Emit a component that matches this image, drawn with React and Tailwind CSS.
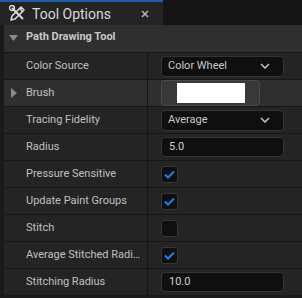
import React from "react";

const font = { fontFamily: "Roboto, 'Noto Sans', sans-serif" };

function Chevron() {
  return (
    <svg width="10" height="6" viewBox="0 0 10 6" className="shrink-0">
      <path d="M1 1 L5 5 L9 1" fill="none" stroke="#c0c0c0" strokeWidth="1.6" />
    </svg>
  );
}

function Dropdown({ value }) {
  return (
    <div className="w-[123px] h-[21px] rounded-[4px] bg-[#0f0f0f] border border-[#353535] flex items-center justify-between pl-[6px] pr-[13px] text-[11px] text-[#c8c8c8]">
      <span>{value}</span>
      <Chevron />
    </div>
  );
}

function NumInput({ value }) {
  return (
    <div className="w-[123px] h-[20px] rounded-[4px] bg-[#0f0f0f] border border-[#353535] flex items-center pl-[7px] text-[11px] text-[#d0d0d0]">
      {value}
    </div>
  );
}

function Check({ checked }) {
  return (
    <div className="w-[17px] h-[17px] rounded-[3px] bg-[#0f0f0f] border border-[#353535] flex items-center justify-center">
      {checked && (
        <svg width="11" height="9" viewBox="0 0 11 9">
          <path d="M1 4.5 L4 7.5 L10 1.5" fill="none" stroke="#1b80e8" strokeWidth="2" />
        </svg>
      )}
    </div>
  );
}

function Row({ label, children, light, arrow }) {
  return (
    <div className={`flex h-[27px] border-t border-[#161616] ${light ? "bg-[#2f2f2f]" : "bg-[#242424]"}`}>
      <div className="w-[143px] flex items-center relative pl-[22px] text-[11px] text-[#c0c0c0] whitespace-nowrap overflow-hidden">
        {arrow && (
          <svg width="6" height="10" viewBox="0 0 6 10" className="absolute left-[7px] top-[8px]">
            <path d="M0 0 L6 5 L0 10 Z" fill="#8a8a8a" />
          </svg>
        )}
        <span className="truncate pr-[3px]">{label}</span>
      </div>
      <div className="w-px bg-[#161616]" />
      <div className="flex-1 flex items-center pl-[13px]">{children}</div>
    </div>
  );
}

export default function App() {
  return (
    <div style={font} className="w-[302px] h-[298px] bg-[#1a1a1a] flex flex-col overflow-hidden">
      <div className="h-[25px] shrink-0 flex bg-[#151515]">
        <div className="w-[163px] bg-[#242424] border-t-2 border-[#1d5fa8] flex items-center whitespace-nowrap">
          <svg width="18" height="17" viewBox="0 0 18 17" className="ml-[9px] shrink-0">
            <path d="M2 15 L3 11 L12 2 L15 5 L6 14 Z" fill="none" stroke="#d8d8d8" strokeWidth="1.6" strokeLinejoin="round" />
            <path d="M10.5 3.5 L13.5 6.5" stroke="#d8d8d8" strokeWidth="1.4" />
            <path d="M3 3 L14 14" stroke="#d8d8d8" strokeWidth="2" />
            <circle cx="3" cy="3" r="2.5" fill="none" stroke="#d8d8d8" strokeWidth="1.4" />
          </svg>
          <span className="ml-[5px] text-[14px] text-[#d8d8d8] leading-none">Tool Options</span>
          <div className="flex-1" />
          <svg width="8" height="8" viewBox="0 0 8 8" className="mr-[14px] shrink-0">
            <path d="M1 1 L7 7 M7 1 L1 7" stroke="#b0b0b0" strokeWidth="1.6" />
          </svg>
        </div>
      </div>
      <div className="flex-1 flex flex-col pl-[4px]">
        <div className="h-[27px] shrink-0 bg-[#2f2f2f] flex items-center pb-[2px]">
          <svg width="9" height="6" viewBox="0 0 9 6" className="ml-[5px]">
            <path d="M0 0 L9 0 L4.5 6 Z" fill="#8a8a8a" />
          </svg>
          <span className="ml-[8px] text-[11px] font-bold text-[#c8c8c8]">Path Drawing Tool</span>
        </div>
        <Row label="Color Source"><Dropdown value="Color Wheel" /></Row>
        <Row label="Brush" light arrow>
          <div className="w-[99px] h-[26px] rounded-[4px] bg-[#383838] border border-[#4a4a4a] flex items-center justify-center">
            <div className="w-[68px] h-[20px] bg-white" />
          </div>
        </Row>
        <Row label="Tracing Fidelity"><Dropdown value="Average" /></Row>
        <Row label="Radius"><NumInput value="5.0" /></Row>
        <Row label="Pressure Sensitive"><Check checked /></Row>
        <Row label="Update Paint Groups"><Check checked /></Row>
        <Row label="Stitch"><Check /></Row>
        <Row label="Average Stitched Radius"><Check checked /></Row>
        <Row label="Stitching Radius"><NumInput value="10.0" /></Row>
      </div>
    </div>
  );
}
